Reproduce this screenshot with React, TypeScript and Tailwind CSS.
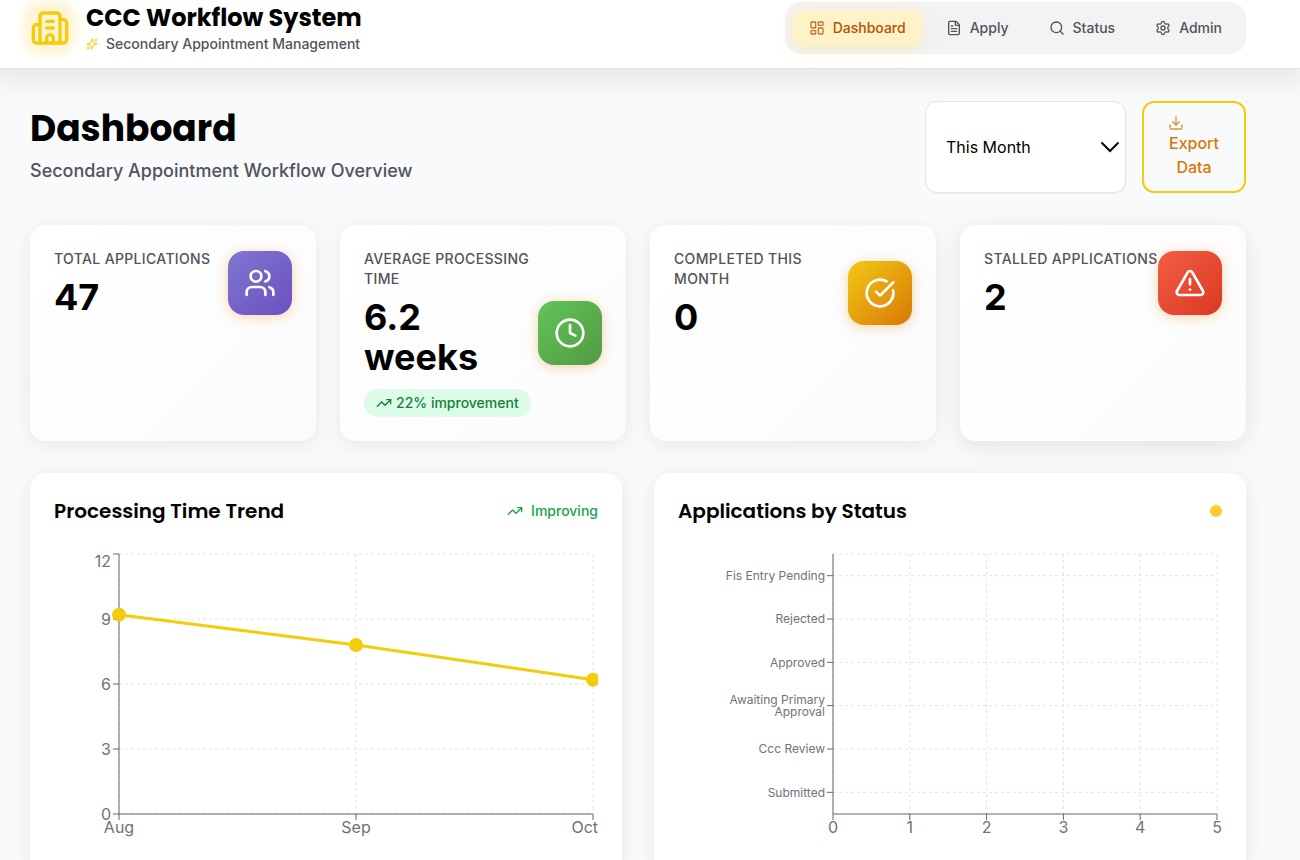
import React from "react";
import {
  Building2,
  CircleCheckBig,
  Clock,
  Download,
  FileText,
  LayoutDashboard,
  Search,
  Settings,
  Sparkles,
  TrendingUp,
  TriangleAlert,
  Users,
  type LucideIcon,
} from "lucide-react";

const HEADING = "font-[Poppins,Inter,sans-serif]";

const navItems: { label: string; icon: LucideIcon; active?: boolean }[] = [
  { label: "Dashboard", icon: LayoutDashboard, active: true },
  { label: "Apply", icon: FileText },
  { label: "Status", icon: Search },
  { label: "Admin", icon: Settings },
];

function Header() {
  return (
    <header className="relative border-b border-[#e2e3e5] bg-white pb-3 pl-[30px] pr-[54px] shadow-[0_6px_24px_8px_rgba(0,0,0,0.07)]">
      <div className="flex h-14 items-center justify-between">
        <div className="flex items-center gap-4">
          <span className="rounded-xl bg-[#fff4d6] shadow-[0_0_10px_7px_#fff4d6]">
            <Building2 className="size-10 text-[#f4cc0b]" />
          </span>
          <div>
            <div className={`${HEADING} text-2xl leading-8 font-bold text-black`}>CCC Workflow System</div>
            <div className="flex items-center gap-2 text-sm font-medium text-[#52525b]">
              <Sparkles className="size-3 text-[#f4cc0b]" />
              Secondary Appointment Management
            </div>
          </div>
        </div>
        <nav className="flex gap-2 rounded-2xl bg-[#f3f3f3] p-2">
          {navItems.map(({ label, icon: Icon, active }) => (
            <a
              key={label}
              href="#"
              className={
                active
                  ? "flex items-center gap-2 rounded-xl bg-[#fff2c6] px-4 py-2 text-sm font-medium text-[#b45309] shadow-[0_4px_20px_rgba(241,196,15,0.15)]"
                  : "flex items-center gap-2 rounded-xl px-4 py-2 text-sm font-medium text-[#52525b]"
              }
            >
              <Icon className={active ? "size-4 opacity-80" : "size-4"} />
              {label}
            </a>
          ))}
        </nav>
      </div>
    </header>
  );
}

function PageTitle() {
  return (
    <div className="flex items-center justify-between">
      <div>
        <h1 className={`${HEADING} text-4xl leading-10 font-bold text-black`}>Dashboard</h1>
        <p className="mt-2 text-lg leading-7 font-medium text-[#52525b]">Secondary Appointment Workflow Overview</p>
      </div>
      <div className="flex gap-4">
        <div className="relative flex">
          <select
            aria-label="Reporting period"
            className="w-[201px] appearance-none rounded-xl border border-[#e4e4e7] bg-white pl-5 pr-8 text-base font-normal text-black shadow-[0_1px_2px_rgba(0,0,0,0.05)]"
          >
            <option>This Month</option>
            <option>This Quarter</option>
            <option>This Year</option>
          </select>
          <svg
            viewBox="0 0 20 12"
            className="pointer-events-none absolute top-10 right-1.5 h-3 w-5"
            fill="none"
            stroke="black"
            strokeWidth="2"
            strokeLinecap="round"
          >
            <path d="M2 2l8 8 8-8" />
          </svg>
        </div>
        <button className="w-[104px] rounded-xl border-2 border-[#f4cc0b] px-6 py-3 text-base font-medium text-[#d97706]">
          <Download className="size-4 opacity-80" />
          Export Data
        </button>
      </div>
    </div>
  );
}

const stats: { label: string; value: string; icon: LucideIcon; tile: string; shadow: string; badge?: string }[] = [
  {
    label: "Total Applications",
    value: "47",
    icon: Users,
    tile: "from-[#7f77d0] to-[#6b4fc0]",
    shadow: "shadow-[0_4px_20px_rgba(0,0,0,0.08)]",
  },
  {
    label: "Average Processing Time",
    value: "6.2 weeks",
    icon: Clock,
    tile: "from-[#62c458] to-[#529a42]",
    shadow: "shadow-[0_4px_20px_rgba(0,0,0,0.08)]",
    badge: "22% improvement",
  },
  {
    label: "Completed This Month",
    value: "0",
    icon: CircleCheckBig,
    tile: "from-[#f1c915] to-[#d97706]",
    shadow: "shadow-[0_4px_20px_rgba(0,0,0,0.08)]",
  },
  {
    label: "Stalled Applications",
    value: "2",
    icon: TriangleAlert,
    tile: "from-[#f15f43] to-[#dc3522]",
    shadow: "shadow-[0_5px_24px_rgba(0,0,0,0.1)]",
  },
];

function StatCards() {
  return (
    <section className="mt-8 grid grid-cols-4 gap-6">
      {stats.map(({ label, value, icon: Icon, tile, shadow, badge }) => (
        <article key={label} className={`${shadow} rounded-2xl bg-linear-135 from-white to-[#fbfbfb] p-6`}>
          <div className="flex items-center justify-between">
            <div className="min-w-0 flex-1">
              <h2 className="text-sm font-medium tracking-wide text-[#52525b] uppercase">{label}</h2>
              <p className="mt-2 text-4xl font-bold text-black">{value}</p>
              {badge && (
                <p className="mt-3 inline-flex items-center gap-1 rounded-full bg-[#dcfce7] px-3 py-1 text-sm font-medium text-[#15803d]">
                  <TrendingUp className="size-4" />
                  {badge}
                </p>
              )}
            </div>
            <span
              className={`${tile} flex size-16 shrink-0 items-center justify-center rounded-2xl bg-linear-135 shadow-[0_2px_12px_rgba(230,150,50,0.4)]`}
            >
              <Icon className="size-8 text-white" />
            </span>
          </div>
        </article>
      ))}
    </section>
  );
}

const trend = [
  { month: "Aug", weeks: 9.2 },
  { month: "Sep", weeks: 7.8 },
  { month: "Oct", weeks: 6.2 },
];

const BASE = 265;
const TOP = 5;
const RIGHT = 539;

function TrendChart() {
  const left = 65;
  const x = (i: number) => left + i * 237;
  const y = (v: number) => BASE - (v * 260) / 12;
  return (
    <svg viewBox="0 0 544 300" className="mt-6 block w-full" role="img" aria-label="Processing time in weeks by month">
      <g stroke="#e4e4e7" strokeDasharray="3 3">
        {[0, 3, 6, 9, 12].map((v) => (
          <line key={v} x1={left} x2={RIGHT} y1={y(v)} y2={y(v)} />
        ))}
        {trend.map((p, i) => (
          <line key={p.month} x1={x(i)} x2={x(i)} y1={TOP} y2={BASE} />
        ))}
      </g>
      <g stroke="#666">
        <line x1={left} x2={RIGHT} y1={BASE} y2={BASE} />
        <line x1={left} x2={left} y1={TOP} y2={BASE} />
        {[0, 3, 6, 9, 12].map((v) => (
          <line key={v} x1={left - 6} x2={left} y1={y(v)} y2={y(v)} />
        ))}
        {trend.map((p, i) => (
          <line key={p.month} x1={x(i)} x2={x(i)} y1={BASE} y2={BASE + 6} />
        ))}
      </g>
      <g fill="#71717a" fontSize="16">
        {[0, 3, 6, 9].map((v) => (
          <text key={v} x={left - 8} y={y(v) + 6} textAnchor="end">
            {v}
          </text>
        ))}
        <text x={left - 8} y="18" textAnchor="end">
          12
        </text>
        <text x={x(0)} y="284" textAnchor="middle">
          Aug
        </text>
        <text x={x(1)} y="284" textAnchor="middle">
          Sep
        </text>
        <text x="544" y="284" textAnchor="end">
          Oct
        </text>
      </g>
      <polyline
        points={trend.map((p, i) => `${x(i)},${y(p.weeks)}`).join(" ")}
        fill="none"
        stroke="#f4cc0b"
        strokeWidth="3"
      />
      {trend.map((p, i) => (
        <circle key={p.month} cx={x(i)} cy={y(p.weeks)} r="7" fill="#f4cc0b" />
      ))}
    </svg>
  );
}

const statuses = [
  ["Fis Entry Pending"],
  ["Rejected"],
  ["Approved"],
  ["Awaiting Primary", "Approval"],
  ["Ccc Review"],
  ["Submitted"],
];

function StatusChart() {
  const left = 155;
  const x = (v: number) => left + (v * 384) / 5;
  const y = (i: number) => TOP + ((i + 0.5) * 260) / 6;
  const counts = [0, 1, 2, 3, 4, 5];
  return (
    <svg viewBox="0 0 544 300" className="mt-6 block w-full" role="img" aria-label="Number of applications by status">
      <g stroke="#e4e4e7" strokeDasharray="3 3">
        <line x1={left} x2={RIGHT} y1={TOP} y2={TOP} />
        {statuses.map((s, i) => (
          <line key={s[0]} x1={left} x2={RIGHT} y1={y(i)} y2={y(i)} />
        ))}
        {counts.map((v) => (
          <line key={v} x1={x(v)} x2={x(v)} y1={TOP} y2={BASE} />
        ))}
      </g>
      <g stroke="#666">
        <line x1={left} x2={RIGHT} y1={BASE} y2={BASE} />
        <line x1={left} x2={left} y1={TOP} y2={BASE} />
        {statuses.map((s, i) => (
          <line key={s[0]} x1={left - 6} x2={left} y1={y(i)} y2={y(i)} />
        ))}
        {counts.map((v) => (
          <line key={v} x1={x(v)} x2={x(v)} y1={BASE} y2={BASE + 6} />
        ))}
      </g>
      <g fill="#71717a" fontSize="12" textAnchor="end">
        {statuses.map((lines, i) => (
          <text key={lines[0]} y={Math.ceil(y(i)) + 4 - (lines.length - 1) * 6}>
            {lines.map((line, n) => (
              <tspan key={line} x={left - 8} dy={n * 12}>
                {line}
              </tspan>
            ))}
          </text>
        ))}
      </g>
      <g fill="#71717a" fontSize="16" textAnchor="middle">
        {counts.map((v) => (
          <text key={v} x={x(v)} y="284">
            {v}
          </text>
        ))}
      </g>
    </svg>
  );
}

function ChartCard({ title, aside, children }: { title: string; aside: React.ReactNode; children: React.ReactNode }) {
  return (
    <article className="rounded-2xl bg-white p-6 shadow-[0_4px_20px_rgba(0,0,0,0.08)]">
      <div className="flex items-center justify-between">
        <h2 className={`${HEADING} text-xl font-semibold text-black`}>{title}</h2>
        {aside}
      </div>
      {children}
    </article>
  );
}

export default function App() {
  return (
    <div className="min-h-screen bg-[#f9fafc] font-[Inter,sans-serif]">
      <Header />
      <main className="pt-8 pr-[54px] pb-8 pl-[30px]">
        <PageTitle />
        <StatCards />
        <section className="mt-8 grid grid-cols-2 gap-8">
          <ChartCard
            title="Processing Time Trend"
            aside={
              <span className="flex items-center gap-2 text-sm font-medium text-[#16a34a]">
                <TrendingUp className="size-4" />
                Improving
              </span>
            }
          >
            <TrendChart />
          </ChartCard>
          <ChartCard title="Applications by Status" aside={<span className="size-3 rounded-full bg-[#f5d02f]" />}>
            <StatusChart />
          </ChartCard>
        </section>
      </main>
    </div>
  );
}
